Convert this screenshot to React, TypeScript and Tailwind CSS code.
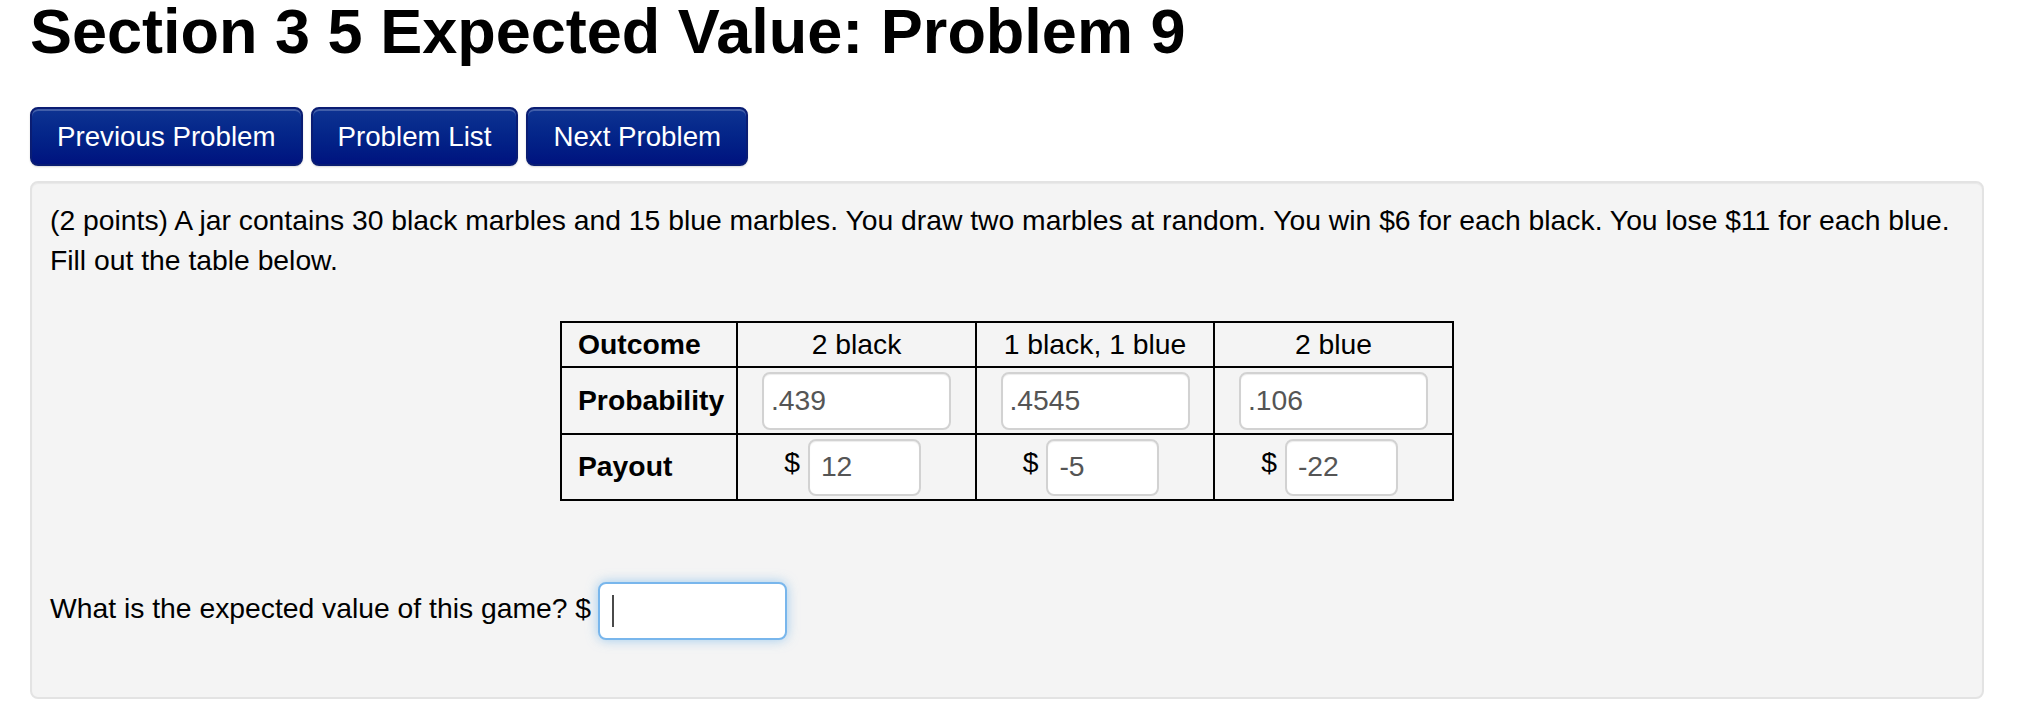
import React from "react";

function ProbInput({ value }: { value: string }) {
  return (
    <div className="mx-auto flex h-[58px] w-[189px] items-center rounded-[8px] border-2 border-[#d2d2d2] bg-white pl-[7px] text-[#555555] shadow-[inset_0_1px_1px_rgba(0,0,0,0.075)]">
      {value}
    </div>
  );
}

function PayInput({ value }: { value: string }) {
  return (
    <div className="flex items-center justify-center gap-[8px] pr-[8px]">
      <span className="mb-[8px]">$</span>
      <div className="flex h-[57px] w-[113px] items-center rounded-[8px] border-2 border-[#d2d2d2] bg-white pl-[11px] text-[#555555] shadow-[inset_0_1px_1px_rgba(0,0,0,0.075)]">
        {value}
      </div>
    </div>
  );
}

export default function App() {
  const buttons = ["Previous Problem", "Problem List", "Next Problem"];
  return (
    <div className="min-h-[728px] bg-white pl-[30px] pr-[36px] text-black font-['Liberation_Sans',Arial,Helvetica,sans-serif]">
      <h2 className="text-[63px] font-bold leading-[63px]">
        Section 3 5 Expected Value: Problem 9
      </h2>

      <div className="mt-[44px] flex gap-[8px]">
        {buttons.map((t) => (
          <button
            key={t}
            className="h-[59px] rounded-[8px] border-2 border-[#0a1d73] bg-linear-to-b from-[#0e3392] to-[#00127f] px-[25px] text-[27.7px] leading-none text-white shadow-[inset_0_2px_0_rgba(255,255,255,0.22),0_1px_2px_rgba(0,0,0,0.15)]"
          >
            {t}
          </button>
        ))}
      </div>

      <div className="mt-[15px] rounded-[8px] border-2 border-[#e3e3e3] bg-[#f4f4f4] px-[18px] pt-[18px] pb-[57px] text-[28.3px] leading-[39.6px] shadow-[inset_0_1px_1px_rgba(0,0,0,0.05)]">
        <p className="whitespace-nowrap">
          (2 points) A jar contains 30 black marbles and 15 blue marbles. You draw two marbles at random. You win $6 for each black. You lose $11 for each blue.
          <br />
          Fill out the table below.
        </p>

        <table className="mx-auto mt-[41px] border-collapse">
          <tbody>
            <tr>
              <td className="h-[45px] w-[176px] border-2 border-black p-0 pl-[16px] text-left align-middle font-bold">
                Outcome
              </td>
              <td className="h-[45px] w-[239px] border-2 border-black p-0 text-center align-middle">
                2 black
              </td>
              <td className="h-[45px] w-[238px] border-2 border-black p-0 text-center align-middle">
                1 black, 1 blue
              </td>
              <td className="h-[45px] w-[239px] border-2 border-black p-0 text-center align-middle">
                2 blue
              </td>
            </tr>
            <tr>
              <td className="h-[67px] border-2 border-black p-0 pl-[16px] text-left align-middle font-bold">
                Probability
              </td>
              <td className="h-[67px] border-2 border-black p-0 align-middle">
                <ProbInput value=".439" />
              </td>
              <td className="h-[67px] border-2 border-black p-0 align-middle">
                <ProbInput value=".4545" />
              </td>
              <td className="h-[67px] border-2 border-black p-0 align-middle">
                <ProbInput value=".106" />
              </td>
            </tr>
            <tr>
              <td className="h-[66px] border-2 border-black p-0 pl-[16px] text-left align-middle font-bold">
                Payout
              </td>
              <td className="h-[66px] border-2 border-black p-0 align-middle">
                <PayInput value="12" />
              </td>
              <td className="h-[66px] border-2 border-black p-0 align-middle">
                <PayInput value="-5" />
              </td>
              <td className="h-[66px] border-2 border-black p-0 align-middle">
                <PayInput value="-22" />
              </td>
            </tr>
          </tbody>
        </table>

        <div className="mt-[81px] flex h-[58px] items-center gap-[7px]">
          <span className="mb-[4px]">What is the expected value of this game? $</span>
          <div className="flex h-[58px] w-[189px] items-center rounded-[8px] border-2 border-[#78b6ec] bg-white shadow-[0_0_12px_rgba(102,175,233,0.6)]">
            <span className="ml-[12px] h-[32px] w-[2px] bg-[#4a4a4a]" />
          </div>
        </div>
      </div>
    </div>
  );
}
